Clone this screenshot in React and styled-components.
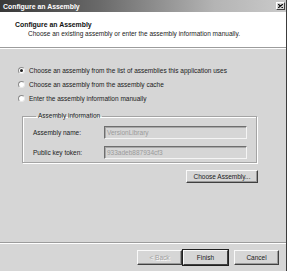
import React from "react";
import styled, { createGlobalStyle } from "styled-components";

const GlobalStyle = createGlobalStyle`
  html, body {
    margin: 0;
    padding: 0;
    background: #d6d6d6;
  }
  body {
    font-family: "Liberation Sans", Arial, sans-serif;
    font-size: 6.5px;
    color: #1a1a1a;
  }
`;

const Window = styled.div`
  width: 286px;
  height: 271px;
  border-right: 1px solid #3c3c3c;
  background: #d6d6d6;
  display: flex;
  flex-direction: column;
  overflow: hidden;
`;

const TitleBar = styled.div`
  height: 12px;
  flex: none;
  display: flex;
  align-items: center;
  padding: 0 1px 0 3px;
  background: linear-gradient(to right, #383838 0%, #6a6a6a 35%, #b4b4b4 75%, #cacaca 100%);
`;

const TitleText = styled.div`
  flex: 1;
  color: #fff;
  font-weight: bold;
  font-size: 6.9px;
`;

const CloseBox = styled.div`
  width: 9px;
  height: 8px;
  background: #d6d6d6;
  border: 1px solid;
  border-color: #fff #404040 #404040 #fff;
  box-sizing: border-box;
  display: flex;
  align-items: center;
  justify-content: center;
`;

const Header = styled.div`
  height: 35px;
  flex: none;
  background: #fff;
  padding: 8px 0 0 15px;
  box-sizing: border-box;
`;

const HeaderTitle = styled.div`
  font-weight: bold;
  font-size: 6.9px;
  color: #111;
  line-height: 9px;
`;

const HeaderSub = styled.div`
  padding-left: 13px;
  line-height: 9px;
  color: #222;
`;

const Etched = styled.div`
  height: 0;
  flex: none;
  border-top: 1px solid #9c9c9c;
  border-bottom: 1px solid #fff;
`;

const Content = styled.div`
  flex: 1;
  padding: 14px 0 0 22px;
  display: flex;
  flex-direction: column;
  align-items: flex-start;
`;

const RadioList = styled.div`
  display: flex;
  flex-direction: column;
  margin-left: -4px;
`;

const RadioRow = styled.label`
  height: 14px;
  display: flex;
  align-items: center;
  gap: 4px;
`;

const RadioDot = styled.span`
  width: 7px;
  height: 7px;
  border-radius: 50%;
  box-sizing: border-box;
  background: #fff;
  border: 1px solid;
  border-color: #8a8a8a #e8e8e8 #e8e8e8 #8a8a8a;
  display: flex;
  align-items: center;
  justify-content: center;
  &::after {
    content: "";
    width: 3px;
    height: 3px;
    border-radius: 50%;
    background: ${(p) => (p.$checked ? "#222" : "transparent")};
  }
`;

const Group = styled.fieldset`
  margin: 7px 0 0 0;
  width: 235px;
  min-width: 0;
  box-sizing: border-box;
  padding: 6px 9px 3px 10px;
  border: 1px solid #a4a4a4;
  box-shadow: inset 1px 1px 0 #fff, 1px 1px 0 #fff;
  display: flex;
  flex-direction: column;
  gap: 7px;
`;

const Legend = styled.legend`
  padding: 0 2px;
  margin-left: 3px;
  line-height: 8px;
`;

const FieldRow = styled.div`
  display: flex;
  align-items: center;
  height: 13px;
`;

const FieldLabel = styled.div`
  width: 71px;
  flex: none;
`;

const FieldInput = styled.div`
  width: 143px;
  height: 13px;
  box-sizing: border-box;
  border: 1px solid;
  border-color: #6e6e6e #f4f4f4 #f4f4f4 #6e6e6e;
  box-shadow: inset 1px 1px 0 #a8a8a8;
  background: #d6d6d6;
  color: #9a9a9a;
  display: flex;
  align-items: center;
  padding-left: 2px;
`;

const Button = styled.button`
  width: ${(p) => p.$w || 45}px;
  height: ${(p) => p.$h || 15}px;
  padding: 0;
  font-family: inherit;
  font-size: 6.5px;
  color: ${(p) => (p.disabled ? "#a0a0a0" : "#1a1a1a")};
  background: #d6d6d6;
  box-sizing: border-box;
  border: 1px solid;
  border-color: #fafafa #404040 #404040 #fafafa;
  box-shadow: ${(p) =>
    p.$primary ? "0 0 0 1px #202020" : "inset -1px -1px 0 #9a9a9a"};
  text-shadow: ${(p) => (p.disabled ? "1px 1px 0 #fff" : "none")};
`;

const ChooseRow = styled.div`
  display: flex;
  justify-content: flex-end;
  width: 236px;
  margin-top: 7px;
`;

const Footer = styled.div`
  flex: none;
  height: 29px;
  display: flex;
  flex-direction: column;
`;

const ButtonRow = styled.div`
  display: flex;
  justify-content: flex-end;
  align-items: center;
  padding: 6px 7px 0 0;
  gap: 1px;
`;

const Gap = styled.span`
  width: 4px;
`;

export default function App() {
  return (
    <>
      <GlobalStyle />
      <Window>
        <TitleBar>
          <TitleText>Configure an Assembly</TitleText>
          <CloseBox>
            <svg width="5" height="4" viewBox="0 0 5 4">
              <path d="M0 0 L5 4 M5 0 L0 4" stroke="#111" strokeWidth="1.2" />
            </svg>
          </CloseBox>
        </TitleBar>
        <Header>
          <HeaderTitle>Configure an Assembly</HeaderTitle>
          <HeaderSub>
            Choose an existing assembly or enter the assembly information manually.
          </HeaderSub>
        </Header>
        <Etched />
        <Content>
          <RadioList>
            <RadioRow>
              <RadioDot $checked />
              Choose an assembly from the list of assemblies this application uses
            </RadioRow>
            <RadioRow>
              <RadioDot />
              Choose an assembly from the assembly cache
            </RadioRow>
            <RadioRow>
              <RadioDot />
              Enter the assembly information manually
            </RadioRow>
          </RadioList>
          <Group>
            <Legend>Assembly information</Legend>
            <FieldRow>
              <FieldLabel>Assembly name:</FieldLabel>
              <FieldInput>VersionLibrary</FieldInput>
            </FieldRow>
            <FieldRow>
              <FieldLabel>Public key token:</FieldLabel>
              <FieldInput>933adeb887934cf3</FieldInput>
            </FieldRow>
          </Group>
          <ChooseRow>
            <Button $w={72} $h={13}>
              Choose Assembly...
            </Button>
          </ChooseRow>
        </Content>
        <Footer>
          <Etched />
          <ButtonRow>
            <Button disabled>&lt; Back</Button>
            <Button $primary>Finish</Button>
            <Gap />
            <Button>Cancel</Button>
          </ButtonRow>
        </Footer>
      </Window>
    </>
  );
}
